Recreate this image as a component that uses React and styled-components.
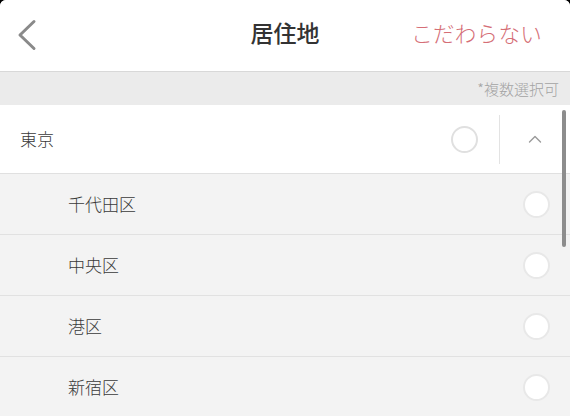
import React from "react";
import styled, { createGlobalStyle } from "styled-components";

const GlobalStyle = createGlobalStyle`
  html, body { margin: 0; padding: 0; background: #000; }
  body { font-family: "Noto Sans CJK JP", "Noto Sans", sans-serif; }
`;

const Frame = styled.div`
  position: relative;
  width: 570px;
  height: 416px;
  overflow: hidden;
  background: #f3f3f3;
  border-radius: 6px 6px 0 0;
`;

const Header = styled.header`
  height: 71px;
  background: #fff;
  border-bottom: 1px solid #d8d8d8;
  display: grid;
  grid-template-columns: 1fr auto 1fr;
  align-items: center;
`;

const BackButton = styled.button`
  justify-self: start;
  background: none;
  border: 0;
  padding: 0 0 0 16px;
  display: flex;
  align-items: center;
  height: 40px;
  margin-top: -2px;
`;

const Title = styled.h1`
  margin: 0;
  font-size: 23px;
  font-weight: 500;
  color: #333;
  margin-top: -7px;
`;

const AnyLink = styled.span`
  justify-self: end;
  padding-right: 28px;
  font-size: 21.5px;
  font-weight: 300;
  color: #d56e76;
  margin-top: -7px;
  letter-spacing: 0.3px;
`;

const SubBar = styled.div`
  height: 33px;
  background: #ebebeb;
  display: flex;
  align-items: center;
  justify-content: flex-end;
  padding-right: 11px;
  font-size: 15px;
  font-weight: 300;
  color: #a3a3a3;
`;

const List = styled.div`
  display: flex;
  flex-direction: column;
`;

const ParentRow = styled.div`
  height: 68px;
  background: #fff;
  border-bottom: 1px solid #e0e0e0;
  display: flex;
  align-items: center;
  padding-left: 20px;
`;

const ChildRow = styled.div`
  height: 60px;
  background: #f3f3f3;
  border-bottom: 1px solid #e1e1e1;
  display: flex;
  align-items: center;
  padding-left: 68px;
  padding-right: 20px;
`;

const Label = styled.span`
  flex: 1;
  font-size: 17px;
  font-weight: 300;
  color: #3a3a3a;
  margin-top: -2px;
`;

const Radio = styled.span`
  width: 23px;
  height: 23px;
  border-radius: 50%;
  border: 2px solid ${(p) => (p.$filled ? "#e8e8e8" : "#e0e0e0")};
  background: ${(p) => (p.$filled ? "#fff" : "transparent")};
  flex-shrink: 0;
`;

const ToggleCell = styled.div`
  margin-left: 21px;
  width: 70px;
  height: 49px;
  border-left: 1px solid #e3e3e3;
  display: flex;
  align-items: center;
  justify-content: center;
`;

const ScrollThumb = styled.div`
  position: absolute;
  right: 4px;
  top: 110px;
  width: 4px;
  height: 137px;
  border-radius: 2px;
  background: #8d8d8d;
`;

const children = ["千代田区", "中央区", "港区", "新宿区"];

export default function App() {
  return (
    <Frame>
      <GlobalStyle />
      <Header>
        <BackButton aria-label="戻る">
          <svg width="22" height="32" viewBox="0 0 22 32">
            <polyline
              points="18,2.5 4,16 18,29.5"
              fill="none"
              stroke="#8a8a8a"
              strokeWidth="3"
              strokeLinecap="round"
              strokeLinejoin="round"
            />
          </svg>
        </BackButton>
        <Title>居住地</Title>
        <AnyLink>こだわらない</AnyLink>
      </Header>
      <SubBar>*複数選択可</SubBar>
      <List>
        <ParentRow>
          <Label>東京</Label>
          <Radio />
          <ToggleCell>
            <svg width="14" height="8" viewBox="0 0 14 8">
              <polyline
                points="1.5,7 7,1.5 12.5,7"
                fill="none"
                stroke="#9a9a9a"
                strokeWidth="1.4"
                strokeLinecap="round"
                strokeLinejoin="round"
              />
            </svg>
          </ToggleCell>
        </ParentRow>
        {children.map((name) => (
          <ChildRow key={name}>
            <Label>{name}</Label>
            <Radio $filled />
          </ChildRow>
        ))}
      </List>
      <ScrollThumb />
    </Frame>
  );
}
